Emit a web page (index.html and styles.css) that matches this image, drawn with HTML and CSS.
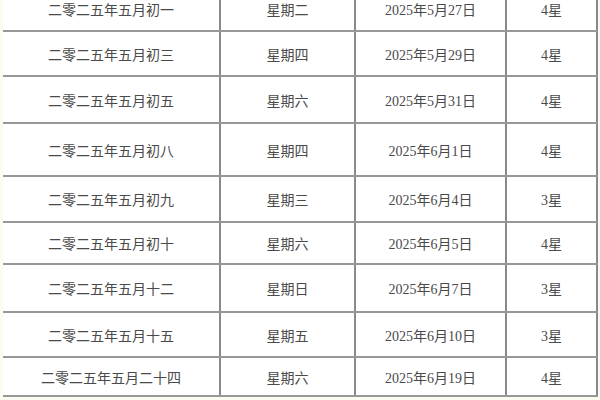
FILE: index.html
```html
<!DOCTYPE html>
<html lang="zh-CN">
<head>
<meta charset="utf-8">
<title>2025年5-6月吉日表</title>
<link rel="stylesheet" href="styles.css">
</head>
<body>
<table class="days">
  <colgroup>
    <col class="c-lunar">
    <col class="c-week">
    <col class="c-date">
    <col class="c-star">
  </colgroup>
  <tbody>
    <tr><td>二零二五年五月初一</td><td>星期二</td><td>2025年5月27日</td><td>4星</td></tr>
    <tr><td>二零二五年五月初三</td><td>星期四</td><td>2025年5月29日</td><td>4星</td></tr>
    <tr><td>二零二五年五月初五</td><td>星期六</td><td>2025年5月31日</td><td>4星</td></tr>
    <tr><td>二零二五年五月初八</td><td>星期四</td><td>2025年6月1日</td><td>4星</td></tr>
    <tr><td>二零二五年五月初九</td><td>星期三</td><td>2025年6月4日</td><td>3星</td></tr>
    <tr><td>二零二五年五月初十</td><td>星期六</td><td>2025年6月5日</td><td>4星</td></tr>
    <tr><td>二零二五年五月十二</td><td>星期日</td><td>2025年6月7日</td><td>3星</td></tr>
    <tr><td>二零二五年五月十五</td><td>星期五</td><td>2025年6月10日</td><td>3星</td></tr>
    <tr><td>二零二五年五月二十四</td><td>星期六</td><td>2025年6月19日</td><td>4星</td></tr>
  </tbody>
</table>
</body>
</html>
```

FILE: styles.css
```css
html, body {
  margin: 0;
  padding: 0;
  background: #fcfbf1;
  overflow: hidden;
}

.days {
  margin: -15px 0 0 3px;
  width: 594px;
  table-layout: fixed;
  border-collapse: collapse;
  background: #ffffff;
  font-family: "Liberation Serif", "Noto Sans CJK SC", serif;
  font-size: 14px;
  color: #4a4a4a;
}

.c-lunar { width: 217px; }
.c-week { width: 135px; }
.c-date { width: 151px; }
.c-star { width: 91px; }

.days td {
  padding: 0;
  text-align: center;
  vertical-align: middle;
  border-top: 2px solid #979797;
  border-bottom: 2px solid #979797;
  border-left: 2px solid #8a8a8a;
  border-right: 2px solid #8a8a8a;
  white-space: nowrap;
}

.days td:first-child {
  border-left: none;
}

.days tr { height: 45px; }
.days tr:nth-child(3) { height: 47px; }
.days tr:nth-child(4) { height: 53px; }
.days tr:nth-child(5) { height: 46px; }
.days tr:nth-child(6) { height: 42px; }
.days tr:nth-child(7) { height: 48px; }
.days tr:nth-child(9) { height: 39px; }
```
